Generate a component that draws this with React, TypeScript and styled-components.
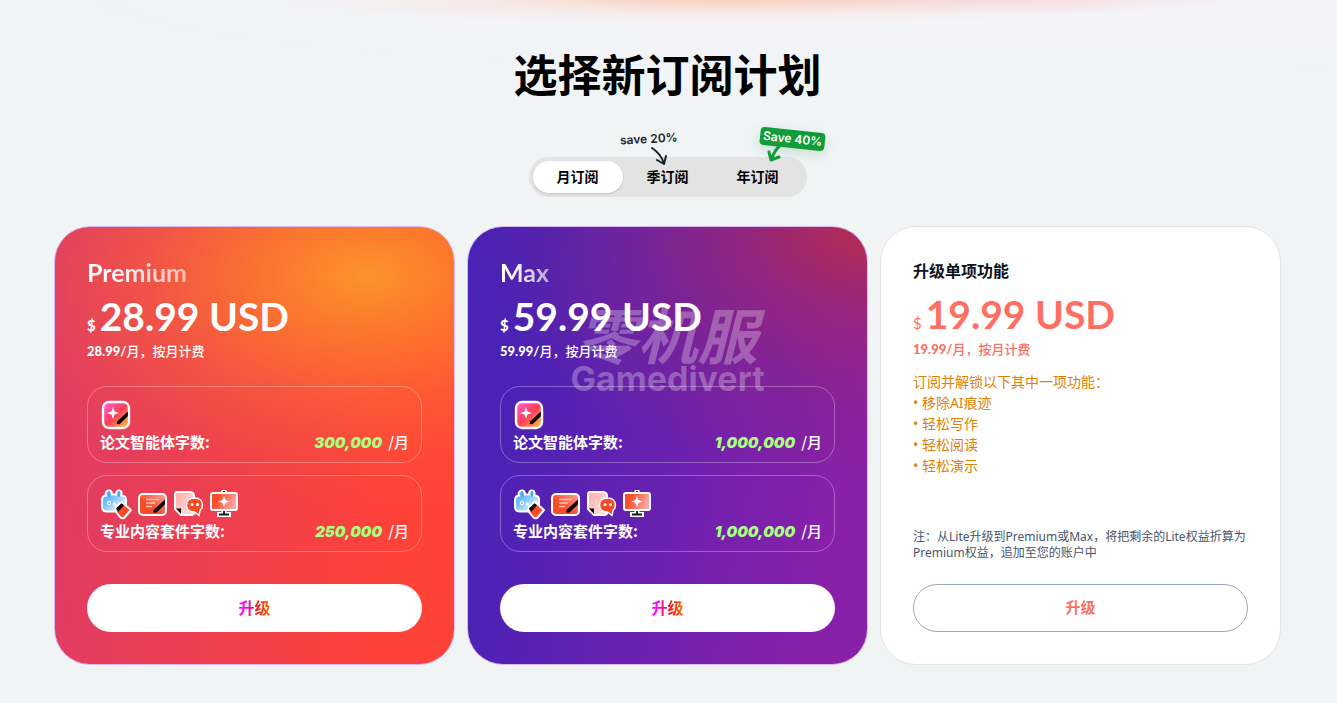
import React, { useState } from "react";
import styled, { createGlobalStyle } from "styled-components";

const GlobalStyle = createGlobalStyle`
  *, *::before, *::after { box-sizing: border-box; }
  body {
    margin: 0;
    min-height: 100vh;
    background: #f0f4f5;
    color: #000;
    font-family: "Noto Sans", "Noto Sans CJK SC", sans-serif;
  }
  button { font-family: inherit; cursor: pointer; }
  h1, h2, p, ul { margin: 0; padding: 0; }
`;

const latin = `Lato, "Noto Sans CJK SC", sans-serif`;

const Page = styled.main`
  min-height: 100vh;
  padding: 41px 56px 38px 54px;
  background:
    radial-gradient(ellipse 34% 24px at 54% 0, rgba(255, 184, 148, 0.6), rgba(255, 200, 172, 0.24) 50%, transparent),
    radial-gradient(ellipse 20% 14px at 74% 0, rgba(246, 196, 208, 0.4), transparent),
    radial-gradient(ellipse 75% 80px at 75% 0, #f4f3f9 40%, transparent);
`;

const Title = styled.h1`
  font: 700 44px/64px "Noto Sans CJK SC", sans-serif;
  text-align: center;
`;

const PeriodTabs = styled.div`
  position: relative;
  display: flex;
  width: max-content;
  margin: 52px auto 29px;
  padding: 4px;
  border-radius: 20px;
  background: #e3e3e3;
`;

const PeriodTab = styled.button<{ $active: boolean }>`
  width: 90px;
  height: 32px;
  padding: 0 0 2px;
  border: 0;
  border-radius: 16px;
  background: ${(p) => (p.$active ? "#fff" : "transparent")};
  box-shadow: ${(p) => (p.$active ? "0 1px 2px rgba(0, 0, 0, 0.15)" : "none")};
  color: #000;
  font: 700 14px/20px "Noto Sans CJK SC", sans-serif;
`;

const QuarterSaving = styled.span`
  position: absolute;
  top: -28px;
  left: 91px;
  color: #1c1f26;
  font: 600 12px/20px Inter, sans-serif;
  transform: rotate(-3deg);
  pointer-events: none;
`;

const YearSaving = styled.span`
  position: absolute;
  top: -27px;
  left: 231px;
  padding: 0 3px;
  border-radius: 4px;
  background: #109c38;
  box-shadow: 0 4px 12px rgba(16, 120, 56, 0.18);
  color: #fff;
  font: 600 12px/18px Inter, sans-serif;
  white-space: nowrap;
  transform: rotate(6deg);
  pointer-events: none;
`;

const ArrowLayer = styled.svg`
  position: absolute;
  top: -12px;
  left: 0;
  pointer-events: none;
`;

const Plans = styled.section`
  position: relative;
  display: grid;
  grid-template-columns: repeat(3, minmax(0, 1fr));
  gap: 12px;
`;

const premiumFill = `
  radial-gradient(ellipse 100% 54% at 78% 11%, #fb932c 0%, rgba(253, 130, 40, 0.78) 26%, rgba(253, 115, 45, 0.42) 54%, rgba(250, 100, 50, 0.14) 80%, rgba(250, 90, 50, 0) 100%),
  linear-gradient(95deg, #df3c64 4%, #ff4238 86%)`;
const maxFill = `
  radial-gradient(ellipse 98% 60% at 100% 0, #b62c50 0%, rgba(160, 40, 105, 0.68) 32%, rgba(145, 38, 120, 0.4) 60%, rgba(130, 35, 150, 0) 100%),
  linear-gradient(102deg, #4a22b5 16%, #8820aa 86%)`;

const Card = styled.article<{ $tone: "premium" | "max" | "plain" }>`
  display: flex;
  flex-direction: column;
  padding: 31px 32px 32px;
  border: 1px solid ${(p) => (p.$tone === "plain" ? "#e2e4e5" : "#d9b8f5")};
  border-radius: 36px;
  background: ${(p) => (p.$tone === "premium" ? premiumFill : p.$tone === "max" ? maxFill : "#fff")};
  color: ${(p) => (p.$tone === "plain" ? "#ff6f61" : "#fff")};
`;

const PlanName = styled.h2`
  width: max-content;
  background: linear-gradient(90deg, #fff 20%, rgba(255, 255, 255, 0.6));
  background-clip: text;
  color: transparent;
  font: 700 25px/28px ${latin};
`;

const FeatureName = styled.h2`
  color: #0c111b;
  font: 700 16px/24px "Noto Sans CJK SC", sans-serif;
  padding-bottom: 2px;
`;

const Price = styled.p`
  display: flex;
  align-items: baseline;
  gap: 4px;
  height: 48px;
  margin-top: 6px;
  font: 700 39px/48px ${latin};
`;

const Currency = styled.span<{ $light?: boolean }>`
  font-size: 15px;
  line-height: 20px;
  font-weight: ${(p) => (p.$light ? 400 : 900)};
`;

const Billing = styled.p`
  height: 18px;
  margin-top: 2px;
  font: 500 13px/18px "Noto Sans CJK SC", sans-serif;
`;

const BillingAmount = styled.span`
  font-family: ${latin};
  font-weight: 900;
`;

const Quotas = styled.div`
  display: grid;
  gap: 12px;
  margin: 26px 0 32px;
`;

const Quota = styled.div`
  padding: 12px 12px 10px;
  border: 1px solid rgba(255, 255, 255, 0.3);
  border-radius: 20px;
`;

const Icons = styled.div`
  display: flex;
  gap: 4px;
  height: 33px;
`;

const QuotaLine = styled.div`
  display: flex;
  align-items: baseline;
  justify-content: space-between;
  height: 20px;
  font: 700 15px/20px "Noto Sans CJK SC", sans-serif;
`;

const Limit = styled.span`
  font-weight: 500;
`;

const Words = styled.em`
  margin-right: 6px;
  color: #a9ff80;
  font: italic 900 15px/20px Inter, sans-serif;
`;

const Upgrade = styled.button<{ $outlined?: boolean }>`
  height: 48px;
  padding: 0 0 2px;
  border: ${(p) => (p.$outlined ? "1px solid #9ca9b6" : "0")};
  border-radius: 24px;
  background: #fff;
  color: #ff6f61;
  font: 700 ${(p) => (p.$outlined ? 15 : 16)}px/24px "Noto Sans CJK SC", sans-serif;
`;

const Rainbow = styled.span`
  background: linear-gradient(90deg, #f0f 20%, #e8101c 55%, #ff7800);
  background-clip: text;
  color: transparent;
`;

const Unlocks = styled.div`
  margin-top: 13px;
  color: #e08008;
  font: 400 14px/21px "Noto Sans", "Noto Sans CJK SC", sans-serif;
`;

const UnlockList = styled.ul`
  list-style: none;
`;

const UnlockItem = styled.li`
  &::before { content: "• "; }
`;

const Note = styled.p`
  margin: auto 0 23px;
  color: #475569;
  font: 400 12px/16px "Noto Sans", "Noto Sans CJK SC", sans-serif;
`;

const Watermark = styled.div`
  position: absolute;
  top: 80px;
  left: 50%;
  width: max-content;
  color: rgba(255, 255, 255, 0.28);
  text-align: center;
  transform: translateX(-50%);
  pointer-events: none;
`;

const WatermarkName = styled.div`
  font: italic 700 60px/54px "Noto Sans CJK SC", sans-serif;
`;

const WatermarkLatin = styled.div`
  font: 700 34px/38px Inter, sans-serif;
`;

const AgentIcon = () => (
  <svg width="32" height="32" viewBox="0 0 32 32" aria-hidden="true">
    <defs>
      <linearGradient id="agent" x1="0" y1="0" x2="1" y2="1">
        <stop stopColor="#ff62d8" />
        <stop offset=".5" stopColor="#ff405b" />
        <stop offset="1" stopColor="#ffc83a" />
      </linearGradient>
    </defs>
    <rect x="3" y="3" width="26" height="26" rx="6" fill="url(#agent)" stroke="#fff" strokeWidth="2.4" />
    <path d="M13 8l1.5 4.500 4.500 1.500-4.500 1.500-1.500 4.500-1.500-4.500-4.500-1.500 4.500-1.500z" fill="#fff" />
    <path d="M16.500 25l.8-2.800 10.500-9.800v4.800l-8.300 8z" fill="#0b0505" />
  </svg>
);

const EraserIcon = () => (
  <svg width="32" height="32" viewBox="0 0 32 32" aria-hidden="true">
    <defs>
      <linearGradient id="bot" x1="0" y1="0" x2="1" y2="1">
        <stop offset=".3" stopColor="#66baff" />
        <stop offset="1" stopColor="#fff" />
      </linearGradient>
    </defs>
    <path d="M9 2.500c3 0 3 2 3 4h4c0-2 0-4 3-4s3 3 2 5c4 0 5 2 5 4v7c0 3-2 5-4 5H7c-4 0-5-2-5-5v-6c0-3 1-5 4-5-1-2 0-5 3-5z" fill="url(#bot)" stroke="#fff" strokeWidth="2" />
    <path d="M9 4v4M19 4v4" stroke="#49a8f4" strokeWidth="2" strokeLinecap="round" />
    <circle cx="9" cy="15" r="1.7" fill="#8cccff" stroke="#fff" />
    <path d="M13 17l1.500-2.500 1.500 2.500zM19 14v3" fill="#fff" stroke="#fff" />
    <path d="M16 19l6-5 9 8-7 8q-2 1-4-1l-4-5q-1-3 0-5z" fill="#ff4c27" stroke="#fff" strokeWidth="2" strokeLinejoin="round" />
    <path d="M16.500 20l5-4.800 2.500 2.100-5.500 6.500-2-2.500q-.8-.5 0-1.300z" fill="#080808" />
  </svg>
);

const WriteIcon = () => (
  <svg width="32" height="32" viewBox="0 0 32 32" aria-hidden="true">
    <defs>
      <linearGradient id="write" x1="0" y1="1" x2="1" y2="0">
        <stop offset=".4" stopColor="#f84c27" />
        <stop offset="1" stopColor="#ffa29c" />
      </linearGradient>
    </defs>
    <rect x="3" y="6" width="27" height="21" rx="4" fill="url(#write)" stroke="#fff" strokeWidth="2" />
    <path d="M10 11.500h13M10 15h9M10 18.500h6" stroke="#ffc0b5" strokeWidth="1.5" />
    <path d="M17 24.500l1-3 11-10v5l-8.500 8z" fill="#0b0505" />
  </svg>
);

const ReadIcon = () => (
  <svg width="32" height="32" viewBox="0 0 32 32" aria-hidden="true">
    <defs>
      <linearGradient id="read" x1="0" y1="0" x2="1" y2="1">
        <stop stopColor="#ffa9a9" />
        <stop offset="1" stopColor="#ffe6e4" />
      </linearGradient>
    </defs>
    <path d="M5 4h13q3 0 4 3v18q0 2-3 2H9l-6-6V7q0-3 2-3z" fill="url(#read)" stroke="#fff" strokeWidth="2" />
    <path d="M4 20.500h5v5.500z" fill="#080808" />
    <path d="M22.500 10c5 0 8 3 8 7 0 2.500-1 4-2.500 5.500l-1 5-4.500-3.500c-5 0-8-3-8-7s3-7 8-7z" fill="#f94824" stroke="#fff" strokeWidth="1.5" />
    <circle cx="20" cy="16.500" r="1.5" fill="#fff" />
    <circle cx="25.500" cy="16.500" r="1.5" fill="#fff" />
  </svg>
);

const PresentIcon = () => (
  <svg width="32" height="32" viewBox="0 0 32 32" aria-hidden="true">
    <defs>
      <linearGradient id="present" x1="0" y1="0" x2="1" y2=".3">
        <stop offset=".3" stopColor="#f94d26" />
        <stop offset="1" stopColor="#ffa5a5" />
      </linearGradient>
    </defs>
    <path d="M16 2v25M9 26.500h14" stroke="#fff" strokeWidth="5" />
    <path d="M16 3v23M11 26.500h10" stroke="#101a20" strokeWidth="1.8" />
    <rect x="3" y="5" width="26" height="17" rx="2" fill="url(#present)" stroke="#fff" strokeWidth="2" />
    <path d="M16 8l1.500 4 4 1.500-4 1.500-1.500 4-1.500-4-4-1.500 4-1.500z" fill="#fff" />
  </svg>
);

type Plan = { name: string; tone: "premium" | "max"; amount: string; agent: string; suite: string };

const plans: Plan[] = [
  { name: "Premium", tone: "premium", amount: "28.99", agent: "300,000", suite: "250,000" },
  { name: "Max", tone: "max", amount: "59.99", agent: "1,000,000", suite: "1,000,000" },
];

const PlanPrice = ({ amount, light }: { amount: string; light?: boolean }) => (
  <>
    <Price><Currency $light={light}>$</Currency><span>{amount} USD</span></Price>
    <Billing><BillingAmount>{amount}/</BillingAmount>月，按月计费</Billing>
  </>
);

const PlanCard = ({ plan }: { plan: Plan }) => (
  <Card $tone={plan.tone}>
    <PlanName>{plan.name}</PlanName>
    <PlanPrice amount={plan.amount} />
    <Quotas>
      <Quota>
        <Icons><AgentIcon /></Icons>
        <QuotaLine><span>论文智能体字数:</span><Limit><Words>{plan.agent}</Words>/月</Limit></QuotaLine>
      </Quota>
      <Quota>
        <Icons><EraserIcon /><WriteIcon /><ReadIcon /><PresentIcon /></Icons>
        <QuotaLine><span>专业内容套件字数:</span><Limit><Words>{plan.suite}</Words>/月</Limit></QuotaLine>
      </Quota>
    </Quotas>
    <Upgrade type="button"><Rainbow>升级</Rainbow></Upgrade>
  </Card>
);

export default function App() {
  const [period, setPeriod] = useState("月订阅");
  return (
    <>
      <GlobalStyle />
      <Page>
        <Title>选择新订阅计划</Title>
        <PeriodTabs>
          {["月订阅", "季订阅", "年订阅"].map((label) => (
            <PeriodTab key={label} type="button" $active={period === label} aria-pressed={period === label} onClick={() => setPeriod(label)}>
              {label}
            </PeriodTab>
          ))}
          <QuarterSaving>save 20%</QuarterSaving>
          <ArrowLayer width="278" height="24" viewBox="0 0 278 24" fill="none" strokeWidth="2" strokeLinecap="round" strokeLinejoin="round" aria-hidden="true">
            <path d="M123 3q8 5 12 15M128 15l7 4 2-8" stroke="#1c1f26" />
            <path d="M252 0q-6 4-9 13M240 7l2 8 8-3" stroke="#109c38" strokeWidth="3" />
          </ArrowLayer>
          <YearSaving>Save 40%</YearSaving>
        </PeriodTabs>
        <Plans>
          {plans.map((plan) => <PlanCard key={plan.name} plan={plan} />)}
          <Card $tone="plain">
            <FeatureName>升级单项功能</FeatureName>
            <PlanPrice amount="19.99" light />
            <Unlocks>
              <p>订阅并解锁以下其中一项功能：</p>
              <UnlockList>
                {["移除AI痕迹", "轻松写作", "轻松阅读", "轻松演示"].map((item) => <UnlockItem key={item}>{item}</UnlockItem>)}
              </UnlockList>
            </Unlocks>
            <Note>注：从Lite升级到Premium或Max，将把剩余的Lite权益折算为Premium权益，追加至您的账户中</Note>
            <Upgrade type="button" $outlined>升级</Upgrade>
          </Card>
          <Watermark aria-hidden="true">
            <WatermarkName>零机服</WatermarkName>
            <WatermarkLatin>Gamedivert</WatermarkLatin>
          </Watermark>
        </Plans>
      </Page>
    </>
  );
}
